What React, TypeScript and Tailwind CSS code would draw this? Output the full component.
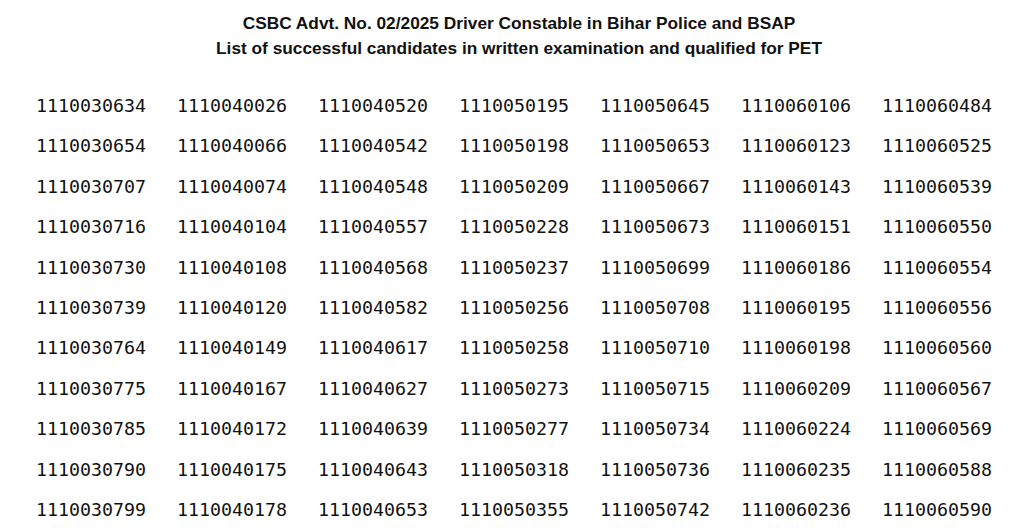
import React from "react";

const cols: string[][] = [
  ["634", "654", "707", "716", "730", "739", "764", "775", "785", "790", "799"].map((s) => "1110030" + s),
  ["026", "066", "074", "104", "108", "120", "149", "167", "172", "175", "178"].map((s) => "1110040" + s),
  ["520", "542", "548", "557", "568", "582", "617", "627", "639", "643", "653"].map((s) => "1110040" + s),
  ["195", "198", "209", "228", "237", "256", "258", "273", "277", "318", "355"].map((s) => "1110050" + s),
  ["645", "653", "667", "673", "699", "708", "710", "715", "734", "736", "742"].map((s) => "1110050" + s),
  ["106", "123", "143", "151", "186", "195", "198", "209", "224", "235", "236"].map((s) => "1110060" + s),
  ["484", "525", "539", "550", "554", "556", "560", "567", "569", "588", "590"].map((s) => "1110060" + s),
];

export default function App() {
  const rows = cols[0].map((_, r) => cols.map((c) => c[r]));
  return (
    <div className="w-[1024px] h-[528px] bg-white overflow-hidden text-[#111]">
      <div className="pt-[11px] pl-[14px] text-center font-['Liberation_Sans',sans-serif] font-bold text-[17.3px] leading-[25px]">
        <div>CSBC Advt. No. 02/2025 Driver Constable in Bihar Police and BSAP</div>
        <div>List of successful candidates in written examination and qualified for PET</div>
      </div>
      <div className="pl-[36px] pt-[34px] font-['DejaVu_Sans_Mono',monospace] text-[18.3px]">
        {rows.map((row, i) => (
          <div key={i} className="flex h-[40.4px] items-start">
            {row.map((n, j) => (
              <div key={j} className="w-[141px] leading-[22px]">{n}</div>
            ))}
          </div>
        ))}
      </div>
    </div>
  );
}
